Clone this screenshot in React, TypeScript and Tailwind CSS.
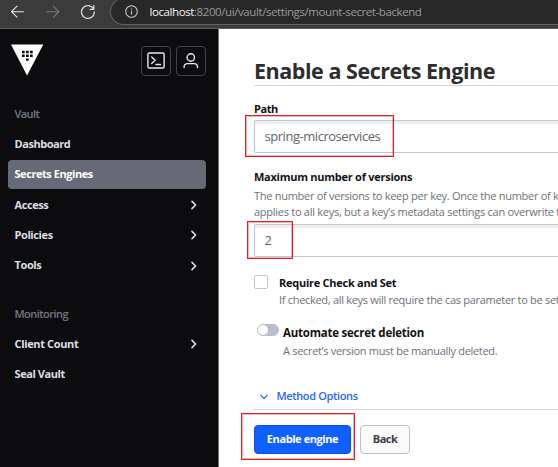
import type { ReactNode } from 'react';

function Chevron() {
  return (
    <svg width="6" height="10" viewBox="0 0 6 10" fill="none" stroke="#e4e5e8" strokeWidth="1.5" strokeLinecap="round" strokeLinejoin="round">
      <path d="M1 1.4 4.6 5 1 8.6" />
    </svg>
  );
}

function NavItem({ children, className, expandable, active }: { children: ReactNode; className: string; expandable?: boolean; active?: boolean }) {
  return (
    <a className={`mb-[1.4px] flex h-[29px] shrink-0 items-center justify-between rounded-[4px] pr-[9.5px] pl-[6.5px] text-[11px] font-bold ${active ? 'bg-[#656a76] text-white' : 'text-[#dedfe3]'}`}>
      <span className={className}>{children}</span>
      {expandable && <Chevron />}
    </a>
  );
}

function BrowserBar() {
  return (
    <header className="flex h-[29px] shrink-0 border-b border-[#5c5e5c] bg-[#3b3b3b]">
      <svg className="h-[28px] w-[110px] shrink-0" viewBox="0 0 110 28" fill="none" strokeLinecap="round" strokeLinejoin="round" strokeWidth="1.15">
        <path d="M23.5 11.7H11.5M17 6.2l-5.5 5.5 5.5 5.5" stroke="#e5e5e5" />
        <path d="M46.5 11.7h12.3M53.3 6.2l5.5 5.5-5.5 5.5" stroke="#7b7b7b" />
        <path d="M93.6 9.1A6.4 6.4 0 1 0 94.3 12M93.8 5.5v3.8H90" stroke="#d8d8d8" strokeWidth="1.3" />
      </svg>
      <div className="-mt-[2px] flex h-[27px] flex-1 items-center rounded-l-full border border-r-0 border-[#606060] bg-[#282828] pl-[14px]">
        <svg className="mr-[11.5px] shrink-0" width="13" height="13" viewBox="0 0 13 13" fill="none" stroke="#c9c9c9" strokeWidth="1.1">
          <circle cx="6.5" cy="6.5" r="5.8" />
          <path d="M6.5 5.7v3.7M6.5 3.4v1.2" />
        </svg>
        <span className="text-[11.5px] leading-none tracking-[-0.41px] whitespace-nowrap text-[#9a9a9a]">
          <span className="text-[#f5f5f5]">localhost</span>:8200/ui/vault/settings/mount-secret-backend
        </span>
      </div>
    </header>
  );
}

function Sidebar() {
  return (
    <nav className="flex w-[219px] shrink-0 flex-col border-r border-[#77777c] bg-[#0c0c0e] px-[8px] pr-[12px]">
      <div className="flex h-[70px] shrink-0 items-start pt-[15px] pl-[3px]">
        <svg width="33" height="33" viewBox="0 0 33 33">
          <path d="M0 .5h32.3L16 31.5z" fill="#fff" />
          <path d="M11 6.7h2.7v2.5H11zM15 6.7h2.7v2.5H15zM19 6.7h2.7v2.5H19zM11 10.6h2.7v2.5H11zM15 10.6h2.7v2.5H15zM19 10.6h2.7v2.5H19zM15 14.4h2.7v2.3H15z" fill="#0c0c0e" />
        </svg>
        <div className="mt-[2px] ml-auto flex gap-[5px]">
          <button className="flex h-[30px] w-[30px] items-center justify-center rounded-[4px] border border-[#41434c]">
            <svg width="18" height="18" viewBox="0 0 18 18" fill="none" stroke="#e9e9ec" strokeWidth="1.4" strokeLinecap="round" strokeLinejoin="round">
              <rect x=".9" y="1" width="16.2" height="15" rx="1.3" />
              <path d="m4.7 5 3.4 3.3-3.4 3.3M9 12.5h4.4" />
            </svg>
          </button>
          <button className="flex h-[30px] w-[30px] items-center justify-center rounded-[4px] border border-[#41434c]">
            <svg width="18" height="18" viewBox="0 0 18 18" fill="none" stroke="#e9e9ec" strokeWidth="1.4" strokeLinecap="round">
              <circle cx="8.8" cy="5.5" r="3.7" />
              <path d="M2.1 15.5v-.6a3.3 3.3 0 0 1 3.3-3.3h6.8a3.3 3.3 0 0 1 3.3 3.3v.6" />
            </svg>
          </button>
        </div>
      </div>
      <div className="h-[30px] shrink-0 pl-[6.5px] text-[11px] leading-[30px] font-semibold text-[#747884]"><span className="tracking-[-0.6px]">Vault</span></div>
      <div className="mt-[0.5px] flex flex-col">
        <NavItem className="tracking-[-0.45px]">Dashboard</NavItem>
        <NavItem className="tracking-[-0.44px]" active>Secrets Engines</NavItem>
        <NavItem className="tracking-[-0.4px]" expandable>Access</NavItem>
        <NavItem className="tracking-[-0.4px]" expandable>Policies</NavItem>
        <NavItem className="tracking-[-0.4px]" expandable>Tools</NavItem>
      </div>
      <div className="mt-[18px] h-[30px] shrink-0 pl-[6.5px] text-[11px] leading-[29px] font-semibold text-[#747884]"><span className="tracking-[-0.54px]">Monitoring</span></div>
      <NavItem className="tracking-[-0.36px]" expandable>Client Count</NavItem>
      <NavItem className="tracking-[-0.42px]">Seal Vault</NavItem>
    </nav>
  );
}

function Field({ children, highlight }: { children: ReactNode; highlight: string }) {
  return (
    <div className="relative h-[33px] shrink-0 rounded-l-[2px] border border-r-0 border-[#c3c6d3] bg-white pl-[9.5px] text-[13px] leading-[31px] text-[#62666e] shadow-[inset_0_3px_0_#f0f0f2]">
      {children}
      <div className={`absolute border border-[#e51c20] shadow-[inset_0_0_0_1px_#e51c2055] ${highlight}`} />
    </div>
  );
}

export default function App() {
  return (
    <div className="flex h-[467px] w-[558px] flex-col overflow-hidden font-['Open_Sans','Noto_Sans',sans-serif]">
      <BrowserBar />
      <div className="flex min-h-0 flex-1">
        <Sidebar />
        <main className="flex min-w-0 flex-1 flex-col overflow-hidden bg-white pl-[35px] whitespace-nowrap text-[#111214]">
          <h1 className="mt-[26px] h-[31px] shrink-0 border-b-[1.5px] border-[#d5d7dc] text-[21.5px] leading-[31px] font-bold text-[#2b2d30]"><span className="tracking-[-0.46px]">Enable a Secrets Engine</span></h1>
          <label className="mt-[14px] h-[20px] shrink-0 text-[11px] leading-[18px] font-bold"><span className="tracking-[-0.45px]">Path</span></label>
          <Field highlight="-top-[6px] -left-[10px] h-[42px] w-[149px]"><span className="tracking-[-0.46px]">spring-microservices</span></Field>
          <label className="mt-[15px] h-[20px] shrink-0 text-[11px] leading-[18px] font-bold"><span className="tracking-[-0.26px]">Maximum number of versions</span></label>
          <p className="h-[36px] shrink-0 text-[11px] leading-[16px] text-[#6c707a]">
            <span className="tracking-[-0.28px]">The number of versions to keep per key. Once the number of k</span><br />
            <span className="tracking-[-0.27px]">applies to all keys, but a key’s metadata settings can overwrite t</span>
          </p>
          <Field highlight="-top-[4px] -left-[8px] h-[38px] w-[46px]">2</Field>
          <div className="mt-[17px] flex h-[50px] shrink-0">
            <span className="mt-[1px] h-[14px] w-[14px] shrink-0 rounded-[2px] border border-[#c2c5cb]" />
            <div className="ml-[11px]">
              <div className="text-[11px] leading-[17px] font-bold"><span className="tracking-[-0.26px]">Require Check and Set</span></div>
              <div className="text-[11px] leading-[18px] text-[#6c707a]"><span className="tracking-[-0.3px]">If checked, all keys will require the cas parameter to be set</span></div>
            </div>
          </div>
          <div className="flex h-[60px] shrink-0 pl-[3px]">
            <span className="h-[12px] w-[22px] shrink-0 rounded-full border border-[#b9bdcb] bg-[#b9bdcb]"><span className="block h-[10px] w-[10px] rounded-full bg-white" /></span>
            <div className="ml-[4px]">
              <div className="text-[11.5px] leading-[18px] font-bold"><span className="tracking-[-0.23px]">Automate secret deletion</span></div>
              <div className="text-[11px] leading-[17px] text-[#6c707a]"><span className="tracking-[-0.3px]">A secret’s version must be manually deleted.</span></div>
            </div>
          </div>
          <div className="flex h-[26px] shrink-0 items-center border-b border-[#d2d4dc] pl-[6px] text-[11px] font-semibold text-[#1f69f6]">
            <svg className="mr-[8.5px]" width="8" height="6" viewBox="0 0 8 6" fill="none" stroke="currentColor" strokeWidth="1.2" strokeLinecap="round"><path d="m.8 1.2 3.2 3.2 3.2-3.2" /></svg>
            <span className="tracking-[-0.36px]">Method Options</span>
          </div>
          <div className="relative mt-[15px] flex gap-[9px] text-[11px] font-bold">
            <button className="h-[29px] w-[97px] rounded-[4px] border border-[#0d4edb] bg-[#1060ff] text-white"><span className="tracking-[-0.42px]">Enable engine</span></button>
            <button className="h-[29px] w-[50px] rounded-[4px] border border-[#bfc0c3] bg-[#fafafa] text-[#3b3d45]"><span className="tracking-[-0.5px]">Back</span></button>
            <div className="absolute -top-[12px] -left-[13px] h-[47px] w-[114px] border border-[#e51c20] shadow-[inset_0_0_0_1px_#e51c2055]" />
          </div>
        </main>
      </div>
    </div>
  );
}
